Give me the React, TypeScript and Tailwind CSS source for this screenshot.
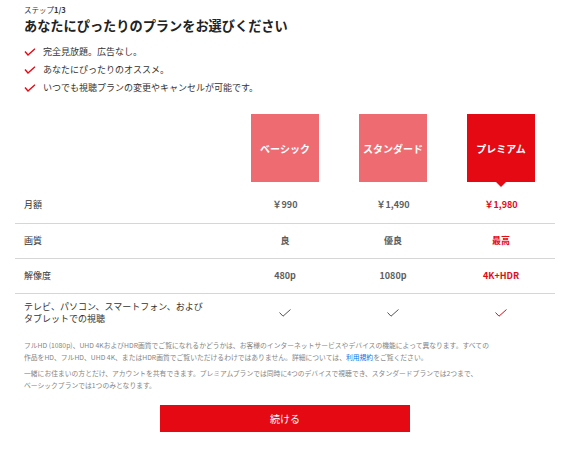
const font = { fontFamily: '"Noto Sans CJK JP", "Noto Sans", sans-serif' };

function RedCheck() {
  return (
    <svg width="12" height="8" viewBox="0 0 12 8" className="shrink-0">
      <polyline points="1,3.5 4,7 11,0.8" fill="none" stroke="#e50914" strokeWidth="1.4" />
    </svg>
  );
}

function CellCheck({ red }: { red?: boolean }) {
  return (
    <svg width="12" height="8" viewBox="0 0 12 8">
      <polyline
        points="0.5,3.5 4,7.2 11.5,0.5"
        fill="none"
        stroke={red ? "#e50914" : "#555"}
        strokeWidth="1"
      />
    </svg>
  );
}

const plans = ["ベーシック", "スタンダード", "プレミアム"];

function Row(props: {
  label: React.ReactNode;
  values: React.ReactNode[];
  className: string;
  border?: boolean;
}) {
  return (
    <div
      className={
        "grid grid-cols-[216px_108px_108px_108px] items-center " +
        props.className +
        (props.border ? " border-b border-[#d6d6d6]" : "")
      }
    >
      <div className="pl-[9px] text-[9px] leading-[12px] text-[#333]">{props.label}</div>
      {props.values.map((v, i) => (
        <div
          key={i}
          className={
            "flex justify-center text-[9px] leading-[18px] font-bold " +
            (i === 2 ? "text-[#e50914]" : "text-[#5e5e5e]")
          }
        >
          {v}
        </div>
      ))}
    </div>
  );
}

export default function App() {
  return (
    <div className="w-[580px] h-[465px] bg-white overflow-hidden" style={font}>
      <div className="pl-6 pt-1">
        <div className="text-[7.5px] leading-[12px] text-[#333]">
          ステップ<span className="font-bold">1/3</span>
        </div>
        <h1 className="text-[13.2px] leading-[20px] font-bold text-[#222]">
          あなたにぴったりのプランをお選びください
        </h1>
        <ul className="mt-[7px]">
          {[
            "完全見放題。広告なし。",
            "あなたにぴったりのオススメ。",
            "いつでも視聴プランの変更やキャンセルが可能です。",
          ].map((t) => (
            <li key={t} className="flex items-center gap-[7px] h-[18px] text-[9px] text-[#333]">
              <RedCheck />
              {t}
            </li>
          ))}
        </ul>
      </div>

      <div className="ml-[15px] w-[540px] mt-[17px]">
        <div className="grid grid-cols-[216px_108px_108px_108px]">
          <div />
          {plans.map((p, i) => (
            <div key={p} className="flex justify-center">
              <div
                className={
                  "relative w-[68px] h-[68px] flex items-center justify-center text-white text-[10px] font-bold " +
                  (i === 2 ? "bg-[#e50914]" : "bg-[#ef6b72]")
                }
              >
                {p}
                {i === 2 && (
                  <span className="absolute left-1/2 -translate-x-1/2 top-full w-0 h-0 border-l-[5px] border-r-[5px] border-t-[5px] border-l-transparent border-r-transparent border-t-[#e50914]" />
                )}
              </div>
            </div>
          ))}
        </div>

        <Row
          className="pt-[14px] pb-[9px]"
          border
          label={<span className="leading-[18px]">月額</span>}
          values={["￥990", "￥1,490", "￥1,980"]}
        />
        <Row className="h-[35px]" border label="画質" values={["良", "優良", "最高"]} />
        <Row className="h-[35px]" border label="解像度" values={["480p", "1080p", "4K+HDR"]} />
        <Row
          className="pt-[7px] pb-[8px]"
          label={
            <>
              テレビ、パソコン、スマートフォン、および
              <br />
              タブレットでの視聴
            </>
          }
          values={[<CellCheck key="a" />, <CellCheck key="b" />, <CellCheck key="c" red />]}
        />
      </div>

      <div className="pl-6 mt-[7px] text-[6.8px] leading-[11.5px] text-[#858585]">
        <p>
          フルHD (1080p)、UHD 4KおよびHDR画質でご覧になれるかどうかは、お客様のインターネットサービスやデバイスの機能によって異なります。すべての
          <br />
          作品をHD、フルHD、UHD 4K、またはHDR画質でご覧いただけるわけではありません。詳細については、
          <span className="text-[#0071eb]">利用規約</span>をご覧ください。
        </p>
        <p className="mt-[5px]">
          一緒にお住まいの方とだけ、アカウントを共有できます。プレミアムプランでは同時に4つのデバイスで視聴でき、スタンダードプランでは2つまで、
          <br />
          ベーシックプランでは1つのみとなります。
        </p>
      </div>

      <div className="flex justify-center pr-[10px] mt-[14px]">
        <button className="w-[250px] h-[27px] bg-[#e50914] text-white text-[10px]">続ける</button>
      </div>
    </div>
  );
}
